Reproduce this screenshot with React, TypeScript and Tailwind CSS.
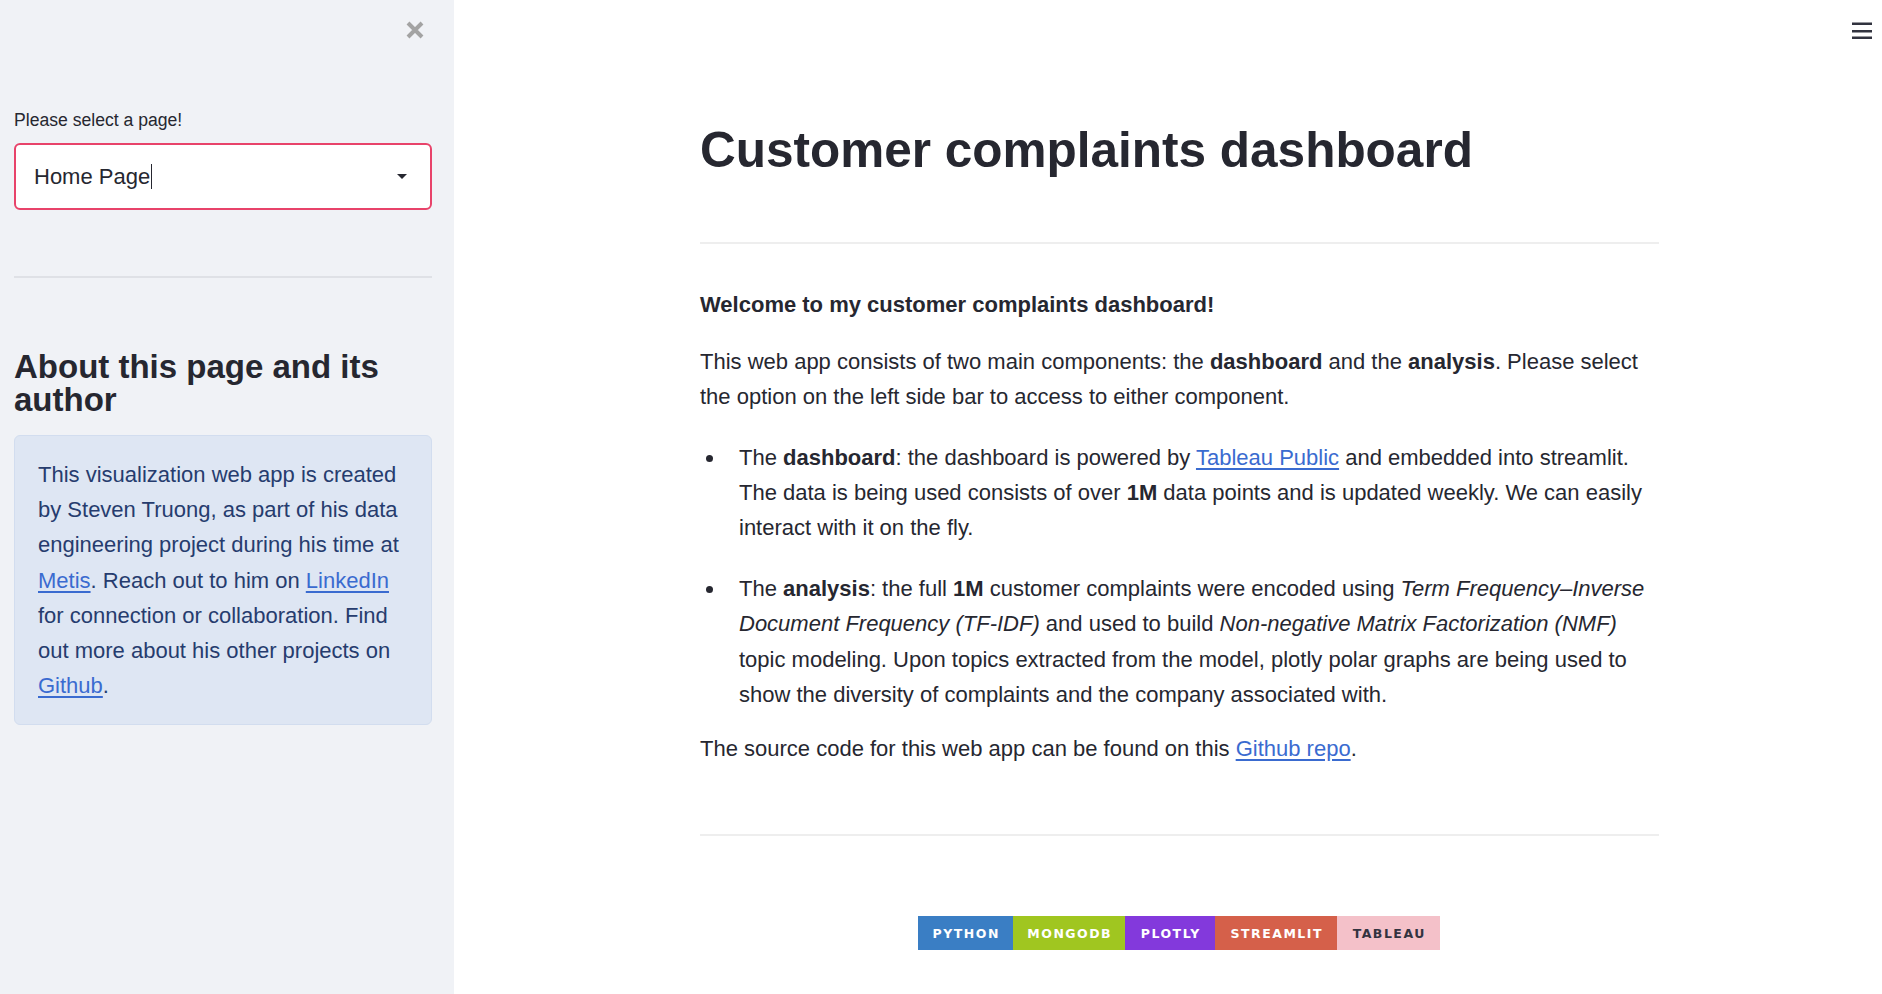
import React from "react";

const A = ({ children }: { children: React.ReactNode }) => (
  <a href="#" className="text-[#3a6bd0] underline underline-offset-[3px]">
    {children}
  </a>
);

const Badge = ({ label, bg, w, dark }: { label: string; bg: string; w: string; dark?: boolean }) => (
  <div
    className={`${bg} ${w} h-[34px] flex items-center justify-center font-['DejaVu_Sans',Verdana,sans-serif] font-bold text-[12.5px] tracking-[1.5px] ${
      dark ? "text-[#333340]" : "text-white"
    }`}
  >
    <span className="pl-[1.5px]">{label}</span>
  </div>
);

export default function App() {
  return (
    <div className="flex min-h-screen w-full font-['Liberation_Sans',Arial,sans-serif] text-[#262730]">
      {/* Sidebar */}
      <aside className="w-[454px] shrink-0 bg-[#f0f2f6] pl-[14px] pr-[22px] min-h-[994px]">
        <div className="flex justify-end pt-[20px] pr-[7px]">
          <svg width="20" height="20" viewBox="0 0 20 20">
            <path d="M3 3 L17 17 M17 3 L3 17" stroke="#a3a3a3" strokeWidth="4" strokeLinecap="butt" />
          </svg>
        </div>
        <div className="mt-[68px] text-[17.6px] leading-[24px]">Please select a page!</div>
        <div className="mt-[11px] h-[67px] rounded-[6px] border-2 border-[#e8436a] bg-white flex items-center pl-[18px] pr-[23px]">
          <div className="flex items-center flex-1 text-[22px] leading-[35px]">
            <span>Home Page</span>
            <span className="ml-[1px] w-px h-[25px] bg-[#262730]" />
          </div>
          <svg width="10" height="5" viewBox="0 0 10 5">
            <path d="M0 0 L10 0 L5 5 Z" fill="#262730" />
          </svg>
        </div>
        <div className="mt-[66px] h-[2px] bg-[#dfe1e6]" />
        <h2 className="mt-[72px] text-[33px] leading-[33px] font-bold">About this page and its author</h2>
        <div className="mt-[19px] rounded-[6px] border border-[#d2ddef] bg-[#dee6f3] pl-[23px] pr-[16px] pt-[21px] pb-[21px] text-[22px] leading-[35.2px] text-[#263c6e]">
          This visualization web app is created by Steven Truong, as part of his data engineering project during his
          time at <A>Metis</A>. Reach out to him on <A>LinkedIn</A> for connection or collaboration. Find out more
          about his other projects on <A>Github</A>.
        </div>
      </aside>

      {/* Main */}
      <main className="relative flex-1 bg-white">
        <div className="absolute top-[22px] right-[10px]">
          <svg width="20" height="18" viewBox="0 0 20 18">
            <rect x="0" y="0.5" width="20" height="2.5" fill="#31333f" />
            <rect x="0" y="8" width="20" height="2.5" fill="#31333f" />
            <rect x="0" y="14.5" width="20" height="2.5" fill="#31333f" />
          </svg>
        </div>
        <div className="ml-[246px] w-[959px] pt-[121px] text-[22px] leading-[35.2px]">
          <h1 className="text-[49.5px] leading-[58px] font-bold">Customer complaints dashboard</h1>
          <div className="mt-[63px] h-[2px] bg-[#eeeeee]" />
          <p className="mt-[43px] font-bold">Welcome to my customer complaints dashboard!</p>
          <p className="mt-[22px]">
            This web app consists of two main components: the <b>dashboard</b> and the <b>analysis</b>. Please select
            the option on the left side bar to access to either component.
          </p>
          <div className="mt-[25px] flex flex-col gap-[26px]">
            <div className="flex">
              <div className="w-[39px] shrink-0">
                <div className="ml-[6px] mt-[15px] w-[7px] h-[7px] rounded-full bg-[#262730]" />
              </div>
              <div>
                The <b>dashboard</b>: the dashboard is powered by <A>Tableau Public</A> and embedded into streamlit.
                The data is being used consists of over <b>1M</b> data points and is updated weekly. We can easily
                interact with it on the fly.
              </div>
            </div>
            <div className="flex">
              <div className="w-[39px] shrink-0">
                <div className="ml-[6px] mt-[15px] w-[7px] h-[7px] rounded-full bg-[#262730]" />
              </div>
              <div>
                The <b>analysis</b>: the full <b>1M</b> customer complaints were encoded using{" "}
                <i>Term Frequency–Inverse Document Frequency (TF-IDF)</i> and used to build{" "}
                <i>Non-negative Matrix Factorization (NMF)</i> topic modeling. Upon topics extracted from the model,
                plotly polar graphs are being used to show the diversity of complaints and the company associated with.
              </div>
            </div>
          </div>
          <p className="mt-[19px]">
            The source code for this web app can be found on this <A>Github repo</A>.
          </p>
          <div className="mt-[68px] h-[2px] bg-[#eeeeee]" />
          <div className="mt-[80px] pl-[218px] flex pb-[43px]">
            <Badge label="PYTHON" bg="bg-[#3a7ec4]" w="w-[95px]" />
            <Badge label="MONGODB" bg="bg-[#a0c620]" w="w-[112px]" />
            <Badge label="PLOTLY" bg="bg-[#8339dc]" w="w-[90px]" />
            <Badge label="STREAMLIT" bg="bg-[#d5604a]" w="w-[122px]" />
            <Badge label="TABLEAU" bg="bg-[#f4c1c9]" w="w-[103px]" dark />
          </div>
        </div>
      </main>
    </div>
  );
}
